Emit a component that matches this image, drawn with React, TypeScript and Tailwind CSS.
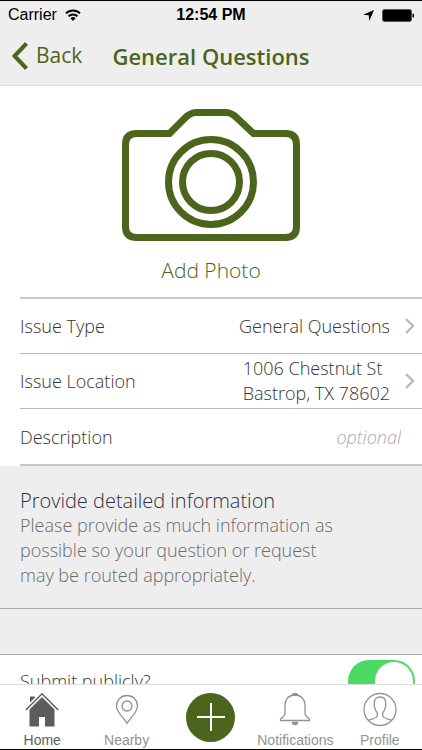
import { useState } from 'react'
import type { ReactNode } from 'react'

const tabs = [
  { label: 'Home', icon: <HomeIcon />, active: true },
  { label: 'Nearby', icon: <PinIcon />, active: false },
  { label: 'New issue', icon: null, active: false },
  { label: 'Notifications', icon: <BellIcon />, active: false },
  { label: 'Profile', icon: <ProfileIcon />, active: false },
]

export default function App() {
  return (
    <div className="flex h-screen flex-col overflow-hidden border-y border-black bg-white font-['Open_Sans','Noto_Sans',sans-serif] font-light text-[#333]">
      <header className="shrink-0 border-b border-[#ddd] bg-[#eee]">
        <StatusBar />
        <NavBar />
      </header>
      <main className="min-h-0 flex-1 overflow-y-auto [scrollbar-width:none]">
        <ReportForm />
      </main>
      <TabBar />
    </div>
  )
}

function StatusBar() {
  return (
    <div className="grid h-7 grid-cols-[1fr_auto_1fr] items-center px-2 font-['Liberation_Sans',Arial,sans-serif] text-base font-normal text-black">
      <div className="flex items-center gap-2">
        <span>Carrier</span>
        <svg viewBox="0 0 16 12" className="h-3 w-4" fill="none" stroke="currentColor" strokeWidth="2">
          <path d="M1 4.4a10 10 0 0 1 14 0" />
          <path d="M3.6 7.2a6.3 6.3 0 0 1 8.8 0" />
          <path d="M8 12 5.4 9.3a3.8 3.8 0 0 1 5.2 0z" fill="currentColor" stroke="none" />
        </svg>
      </div>
      <span className="font-bold">12:54 PM</span>
      <div className="flex items-center justify-end gap-2">
        <svg viewBox="0 0 11 11" className="size-[11px]" fill="currentColor">
          <path d="M11 0 6.2 11 5.8 5.2 0 4.8z" />
        </svg>
        <svg viewBox="0 0 32 13" className="h-[13px] w-8">
          <rect x="0.5" y="0.5" width="29" height="12" rx="2" fill="#000" stroke="#555" />
          <path d="M30.5 4.5a2 2 0 0 1 0 4z" fill="#000" />
        </svg>
      </div>
    </div>
  )
}

function NavBar() {
  return (
    <div className="grid h-14 grid-cols-[1fr_auto_1fr] items-center px-3 pb-[2px] text-[#4b651c]">
      <button type="button" className="flex items-center gap-2 text-[21px] font-normal">
        <svg viewBox="0 0 16 28" className="h-7 w-4" fill="none" stroke="currentColor" strokeWidth="4">
          <path d="M14.5 1.5 2.5 14l12 12.5" />
        </svg>
        Back
      </button>
      <h1 className="text-[22px] font-semibold">General Questions</h1>
    </div>
  )
}

function ReportForm() {
  const [isPublic, setIsPublic] = useState(true)

  return (
    <form>
      <button
        type="button"
        className="flex w-full flex-col items-center gap-[15px] pt-[23px] pb-[13px] text-[21px] leading-7 text-[#4b651c]"
      >
        <CameraIcon />
        Add Photo
      </button>

      <div className="ml-5 divide-y divide-[#bbb] border-y-2 border-[#c8c8c8] text-lg">
        <FormRow label="Issue Type">General Questions</FormRow>
        <FormRow label="Issue Location">
          1006 Chestnut St
          <br />
          Bastrop, TX 78602
        </FormRow>
        <div className="flex h-[55px] items-center justify-between pr-[21px]">
          <label htmlFor="description">Description</label>
          <input
            id="description"
            placeholder="optional"
            className="w-40 bg-transparent text-right outline-none placeholder:text-[#aaa] placeholder:italic"
          />
        </div>
      </div>

      <section className="border-b border-[#aaa] bg-[#eee] px-5 pt-[22px] pb-5 text-lg leading-[25px] text-[#6b6b6b]">
        <h2 className="text-xl leading-[25px] text-[#2b3343]">Provide detailed information</h2>
        <p className="max-w-[325px]">
          Please provide as much information as possible so your question or request may be routed
          appropriately.
        </p>
      </section>

      <div className="h-[46px] border-b border-[#aaa] bg-[#eee]" />

      <div className="flex h-[52px] items-center justify-between pr-[7px] pl-5 text-lg">
        <label htmlFor="public">Submit publicly?</label>
        <input
          id="public"
          type="checkbox"
          role="switch"
          checked={isPublic}
          onChange={(e) => setIsPublic(e.target.checked)}
          className="h-[42px] w-[67px] appearance-none rounded-full bg-[#ddd] p-[2px] before:block before:size-[38px] before:rounded-full before:bg-white checked:bg-[#4cd964] checked:before:ml-auto"
        />
      </div>
    </form>
  )
}

function FormRow({ label, children }: { label: string; children: ReactNode }) {
  return (
    <button type="button" className="flex h-[55px] w-full items-center justify-between pr-[7px]">
      <span>{label}</span>
      <span className="flex items-center gap-[15px]">
        <span className="text-left leading-[25px]">{children}</span>
        <svg viewBox="0 0 10 16" className="h-4 w-[10px] text-[#b8b8b8]" fill="none" stroke="currentColor" strokeWidth="2.4">
          <path d="m1 1 7 7-7 7" />
        </svg>
      </span>
    </button>
  )
}

function TabBar() {
  return (
    <nav className="grid h-[65px] shrink-0 grid-cols-5 border-t border-[#ddd] bg-white font-['Liberation_Sans',Arial,sans-serif] text-sm font-normal">
      {tabs.map((tab) =>
        tab.icon ? (
          <button
            key={tab.label}
            type="button"
            className={`flex flex-col items-center justify-between pt-[7px] ${tab.active ? 'text-[#5f5c5c]' : 'text-[#929292]'}`}
          >
            {tab.icon}
            <span className="leading-[18px]">{tab.label}</span>
          </button>
        ) : (
          <button
            key={tab.label}
            type="button"
            aria-label={tab.label}
            className="flex size-[49px] items-center justify-center place-self-center rounded-full bg-[#4b651c] text-white"
          >
            <svg viewBox="0 0 28 28" className="size-7" stroke="currentColor" strokeWidth="2">
              <path d="M14 0v28M0 14h28" />
            </svg>
          </button>
        ),
      )}
    </nav>
  )
}

function CameraIcon() {
  return (
    <svg viewBox="0 0 178 132" className="h-[132px] w-[178px]" fill="none" stroke="#4b651c" strokeWidth="7">
      <path d="M14.5 24.5H47.5L63 9Q68.5 3.5 74 3.5H104Q109.500 3.5 115 9L131.5 24.5H163.5Q174.5 24.5 174.5 35.5V117.5Q174.5 128.5 163.5 128.5H14.5Q3.5 128.5 3.5 117.5V35.5Q3.5 24.5 14.5 24.5Z" />
      <circle cx="89" cy="73" r="42.5" />
      <circle cx="89" cy="73" r="28.5" />
    </svg>
  )
}

function HomeIcon() {
  return (
    <svg viewBox="0 0 34 36" className="h-9 w-[34px]">
      <path d="M5 4.500h5v5l-5 5z" fill="currentColor" />
      <path d="M17 4 29.500 16.500V34.500H20V25h-6v9.500H4.500V16.500z" fill="currentColor" />
      <path d="M.8 18 17 1.800 33.200 18" fill="none" stroke="#fff" strokeWidth="4.500" />
      <path d="M.8 18 17 1.800 33.200 18" fill="none" stroke="currentColor" strokeWidth="1.500" />
    </svg>
  )
}

function PinIcon() {
  return (
    <svg viewBox="0 0 24 36" className="h-9 w-6" fill="none" stroke="currentColor" strokeWidth="1.3">
      <path d="M12 31.5C9 26 1.500 20.500 1.500 14a10.500 10.500 0 0 1 21 0C22.500 20.500 15 26 12 31.500z" />
      <circle cx="12" cy="14" r="5" />
    </svg>
  )
}

function BellIcon() {
  return (
    <svg viewBox="0 0 32 36" className="h-9 w-8" fill="none" stroke="currentColor" strokeWidth="1.3">
      <path d="M16 3C9.500 3 6 7.500 6 13v8c0 2.500-1.500 4-4.500 6v1.500h29V27c-3-2-4.500-3.500-4.500-6v-8C26 7.500 22.500 3 16 3z" />
      <path d="M13.500 3q0-1.500 2.500-1.500T18.500 3z" fill="currentColor" />
      <path d="M13.500 30.500h5q0 2-2.500 2t-2.500-2z" fill="currentColor" />
    </svg>
  )
}

function ProfileIcon() {
  return (
    <svg viewBox="0 0 34 36" className="h-9 w-[34px]" fill="none" stroke="currentColor" strokeWidth="1.3">
      <circle cx="17" cy="17.500" r="16" />
      <path d="M5.500 28.300C8.500 26.500 14 26.500 14.300 24V20.500C12 18.500 11.200 16 11.200 11.500 11.200 7.500 13.500 5 17 5S22.800 7.500 22.800 11.500C22.800 16 22 18.500 19.700 20.500V24C20 26.500 25.500 26.500 28.500 28.300" />
    </svg>
  )
}
